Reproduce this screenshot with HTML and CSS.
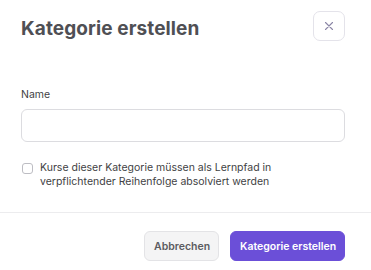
FILE: index.html
```html
<!DOCTYPE html>
<html lang="de">
<head>
<meta charset="utf-8">
<link rel="stylesheet" href="styles.css">
</head>
<body>
<div class="modal">
  <div class="header">
    <h2 class="title">Kategorie erstellen</h2>
    <button class="close" aria-label="Schließen">
      <svg width="10" height="10" viewBox="0 0 10 10"><path d="M1.5 1.5 L8.5 8.5 M8.5 1.5 L1.5 8.5" stroke="#8b86a6" stroke-width="1.1" stroke-linecap="round" fill="none"/></svg>
    </button>
  </div>
  <div class="body">
    <label class="label">Name</label>
    <div class="input"></div>
    <div class="check-row">
      <span class="checkbox"></span>
      <span class="check-text">Kurse dieser Kategorie müssen als Lernpfad in verpflichtender Reihenfolge absolviert werden</span>
    </div>
  </div>
  <div class="footer">
    <button class="btn btn-secondary">Abbrechen</button>
    <button class="btn btn-primary">Kategorie erstellen</button>
  </div>
</div>
</body>
</html>
```
FILE: styles.css
```css
* { box-sizing: border-box; }
html, body { margin: 0; padding: 0; background: #fff; }
body { font-family: Inter, "Noto Sans", sans-serif; width: 371px; height: 270px; overflow: hidden; }
.modal { display: flex; flex-direction: column; }
.header { display: flex; justify-content: space-between; align-items: flex-start; padding: 11px 26px 0 21px; height: 88px; }
.title { margin: 0; padding-top: 6px; font-size: 19px; font-weight: 700; color: #4f4f54; line-height: 23px; letter-spacing: 0.1px; }
.close { width: 32px; height: 30px; border: 1px solid #e4e3ea; border-radius: 7px; background: #fff; display: flex; align-items: center; justify-content: center; padding: 0; }
.body { padding: 0 26px 0 21px; display: flex; flex-direction: column; }
.label { font-size: 10.5px; color: #3f3f44; line-height: 14px; font-weight: 400; }
.input { margin-top: 7px; height: 33px; border: 1px solid #dcdce0; border-radius: 6px; }
.check-row { display: flex; align-items: flex-start; gap: 7px; margin-top: 19px; padding-left: 1px; }
.checkbox { width: 11px; height: 11px; border: 1px solid #bdbdc3; border-radius: 3px; flex: none; margin-top: 2px; }
.check-text { font-size: 10.5px; line-height: 14px; color: #3f3f44; }
.footer { margin-top: 23px; border-top: 1px solid #ececee; display: flex; justify-content: flex-end; gap: 11px; padding: 18px 26px 0 0; }
.btn { font-family: Inter, "Noto Sans", sans-serif; font-size: 10.5px; font-weight: 600; height: 30px; border-radius: 6px; padding: 0 9px; white-space: nowrap; }
.btn-secondary { background: #f4f4f5; border: 1px solid #e3e3e6; color: #5b5b60; width: 75px; }
.btn-primary { background: #6b4fd8; border: 1px solid #6b4fd8; color: #fff; width: 115px; }
```
